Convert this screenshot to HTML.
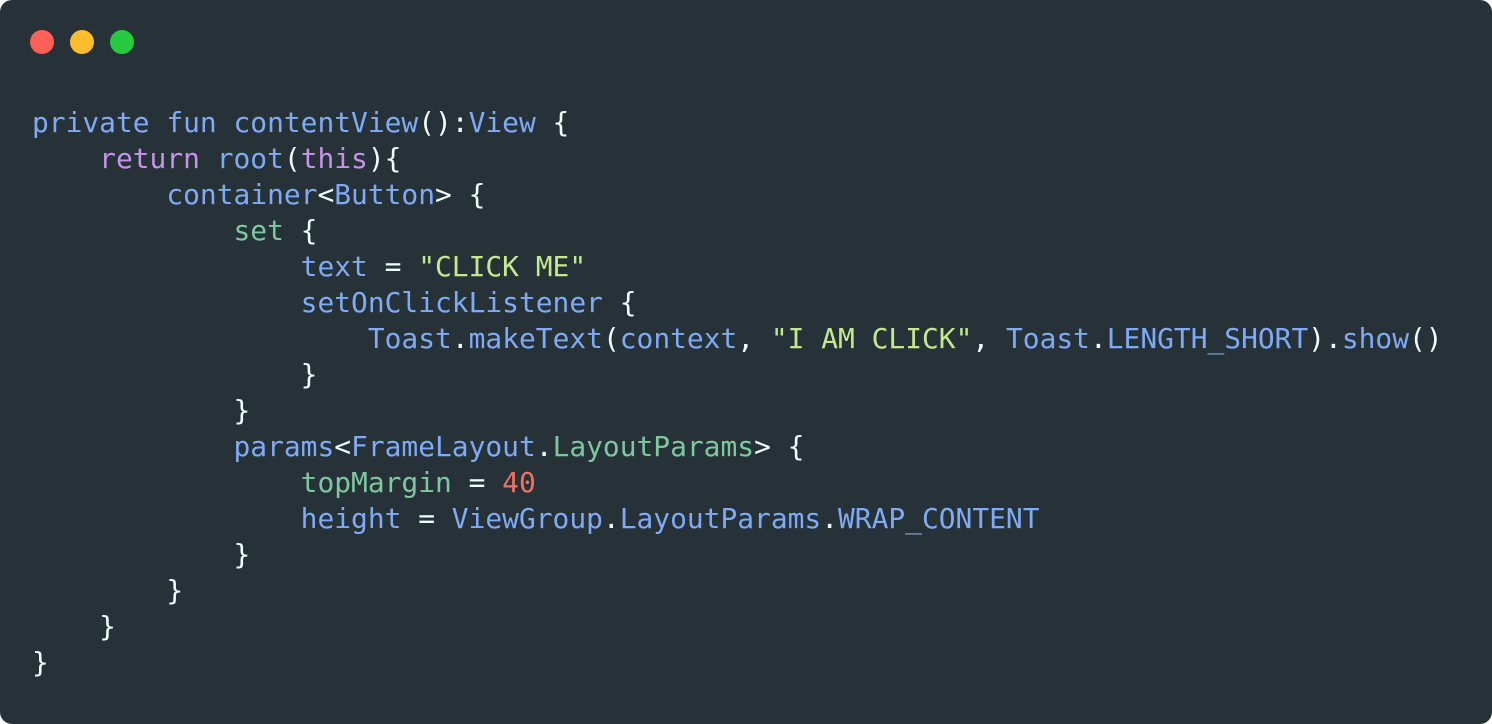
<!DOCTYPE html>
<html><head><meta charset="utf-8"><style>
html,body{margin:0;padding:0;background:#fff;}
.win{position:absolute;left:0;top:0;width:1492px;height:724px;background:#263238;border-radius:12px;overflow:hidden;}
.dot{position:absolute;top:30px;width:24px;height:24px;border-radius:50%;}
pre{position:absolute;left:32px;top:105px;margin:0;font-family:"DejaVu Sans Mono","Liberation Mono",monospace;font-size:27.9px;line-height:36px;color:#eeffff;}
.b{color:#7faaf5}.p{color:#c792ea}.g{color:#7ec8a0}.s{color:#c3e88d}.n{color:#f07160}
</style></head><body><div class="win">
<div class="dot" style="left:30px;background:#ff5f56"></div>
<div class="dot" style="left:70px;background:#ffbd2e"></div>
<div class="dot" style="left:110px;background:#27c93f"></div>
<pre><span class="b">private fun contentView</span>():<span class="b">View</span> {
    <span class="p">return</span> <span class="b">root</span>(<span class="p">this</span>){
        <span class="b">container</span>&lt;<span class="b">Button</span>&gt; {
            <span class="g">set</span> {
                <span class="b">text</span> = <span class="s">"CLICK ME"</span>
                <span class="b">setOnClickListener</span> {
                    <span class="b">Toast</span>.<span class="b">makeText</span>(<span class="b">context</span>, <span class="s">"I AM CLICK"</span>, <span class="b">Toast</span>.<span class="b">LENGTH_SHORT</span>).<span class="b">show</span>()
                }
            }
            <span class="b">params</span>&lt;<span class="b">FrameLayout</span>.<span class="g">LayoutParams</span>&gt; {
                <span class="g">topMargin</span> = <span class="n">40</span>
                <span class="b">height</span> = <span class="b">ViewGroup</span>.<span class="b">LayoutParams</span>.<span class="b">WRAP_CONTENT</span>
            }
        }
    }
}</pre>
</div></body></html>
